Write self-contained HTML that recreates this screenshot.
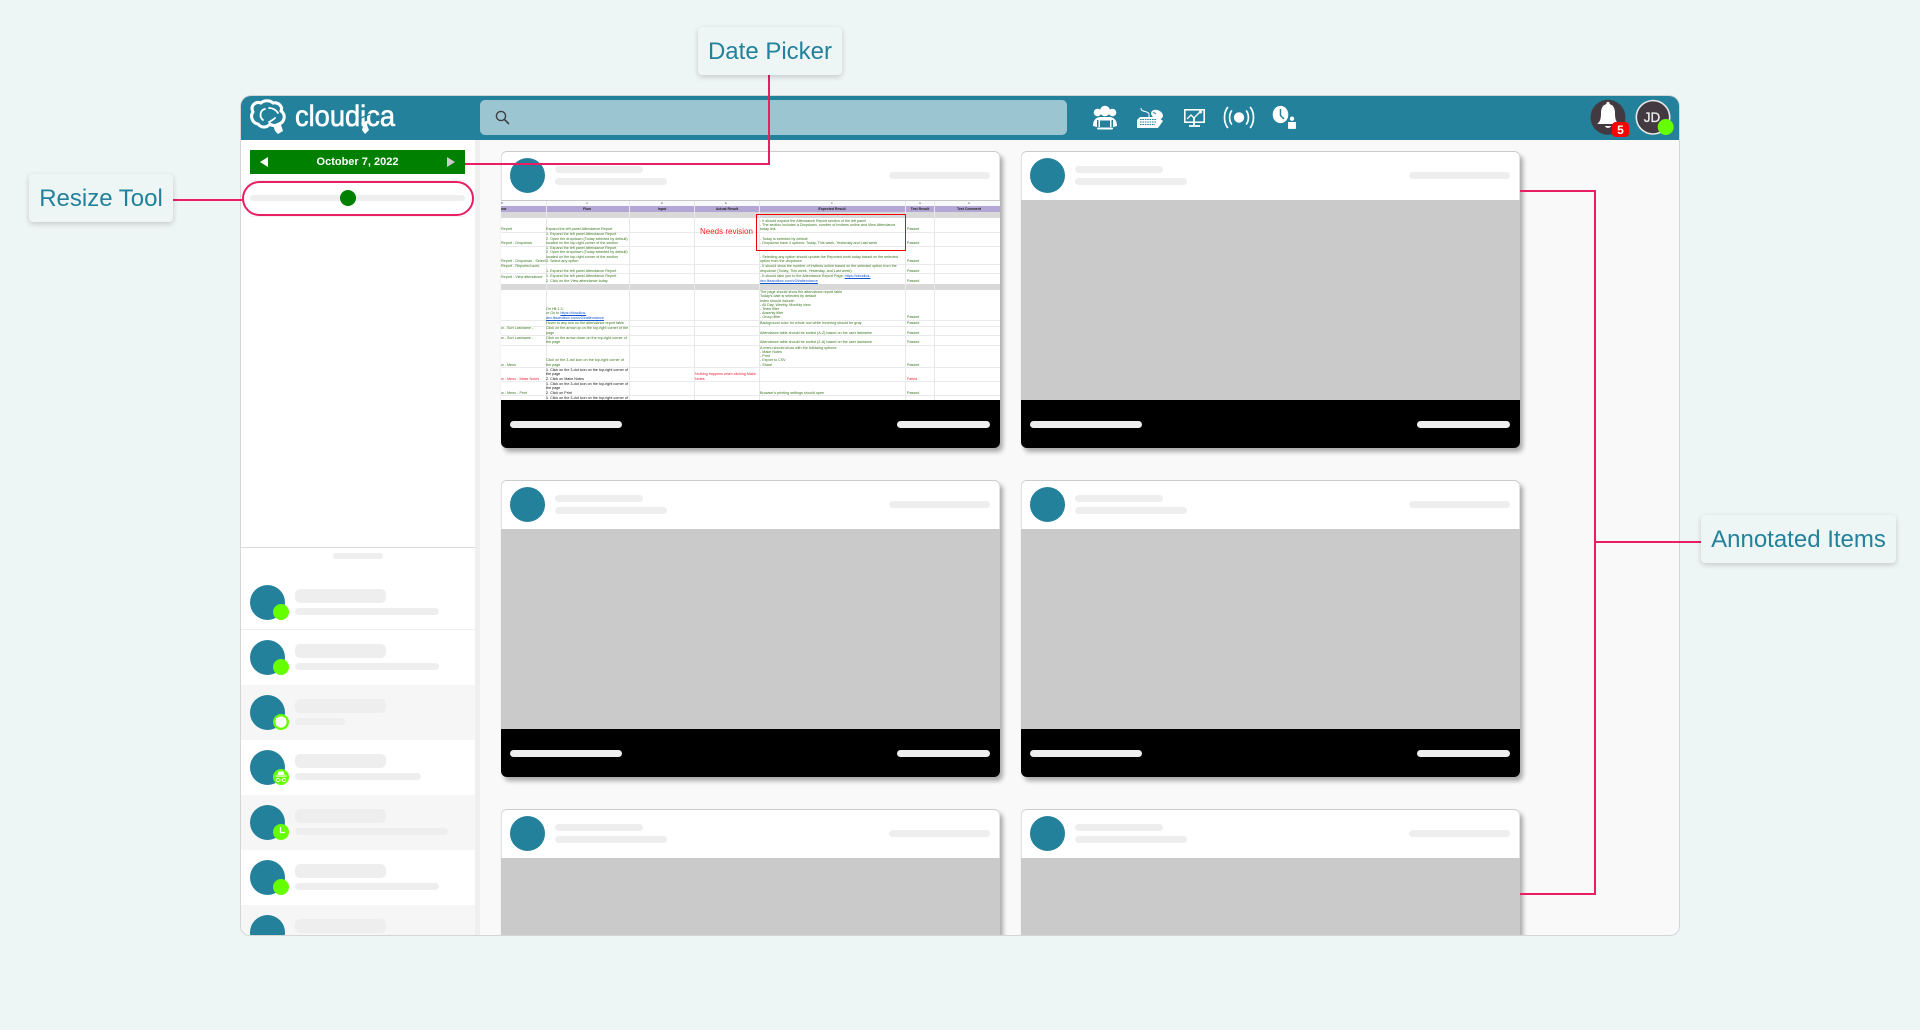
<!DOCTYPE html>
<html><head><meta charset="utf-8"><title>Cloudica</title>
<style>
*{box-sizing:border-box}
html,body{margin:0;padding:0;width:1920px;height:1030px;overflow:hidden;background:#eef6f5;font-family:"Liberation Sans",sans-serif}
.a{position:absolute}
#app{position:absolute;left:241px;top:96px;width:1438px;height:839px;border-radius:10px 10px 9px 9px;overflow:hidden;background:#f9f9f9;box-shadow:0 0 0 1px #d2d6d6}
#pg{position:absolute;left:-241px;top:-96px;width:1920px;height:1031px;overflow:hidden}
.bar{position:absolute;background:#eee;border-radius:4px}
.card{position:absolute;width:498.5px;height:297px;background:#cacaca;border-radius:6px;box-shadow:3px 4px 5px rgba(0,0,0,.32)}
.card.cut{height:126px;border-radius:6px 6px 0 0}
.card .hd{position:absolute;left:0;top:0;width:100%;height:49px;background:#fff;border-radius:6px 6px 0 0;box-shadow:inset 0 1px 0 #ccc,inset 1px 0 0 #e2e2e2,inset -1px 0 0 #e2e2e2}
.card .ft{position:absolute;left:0;top:249px;width:100%;height:48px;background:#000;border-radius:0 0 6px 6px}
.card .av{position:absolute;left:9px;top:7px;width:35px;height:35px;border-radius:50%;background:#23819b}
.card .b1{left:54px;top:15px;width:88px;height:7px}
.card .b2{left:54px;top:27px;width:112px;height:7px}
.card .b3{left:388px;top:21px;width:101px;height:7px}
.card .b4{left:9px;top:21px;width:112px;height:7px;background:#eee}
.card .b5{left:396px;top:21px;width:93px;height:7px;background:#eee}
.row{position:absolute;left:241px;width:234px;height:55px;background:#fff}
.row.g{background:#f6f6f6}
.row .av{position:absolute;left:9px;top:0;width:35px;height:35px;border-radius:50%;background:#23819b}
.row .d{position:absolute;left:32px;width:16px;height:16px;border-radius:50%;background:#66ff00}
.row .n{position:absolute;left:54px;width:91px;height:14px;background:#eee;border-radius:5px}
.row .s{position:absolute;left:54px;height:7px;background:#eee;border-radius:4px}
.call{position:absolute;background:#eef6f5;border-radius:4px;box-shadow:0 2px 6px rgba(0,0,0,.18);color:#23819b;font-size:24px;line-height:50px;text-align:center;white-space:nowrap}
.pk{position:absolute;background:#e91e63}
#sh{position:absolute;left:501px;top:200px;width:498.5px;height:200px;overflow:hidden;background:#fff}
#shi{position:absolute;left:-501px;top:-200px;width:1100px;height:600px;filter:blur(.3px)}
.t{position:absolute;white-space:nowrap;font-size:3.7px;line-height:4px;color:#38761d}
.k{color:#111}.r{color:#e8203a}
.u{color:#1155cc;text-decoration:underline}
.h{position:absolute;white-space:nowrap;font-size:3.5px;line-height:4px;font-weight:bold;color:#222;transform:translateX(-50%);top:206.5px}
.c{position:absolute;white-space:nowrap;font-size:3px;line-height:4px;color:#666;transform:translateX(-50%);top:200.8px}
.hl{position:absolute;left:501px;width:499px;height:1px;background:#eaeaea}
.vl{position:absolute;top:201px;width:1px;height:199px;background:#e8e8e8}
</style></head>
<body>
<div id="app"><div id="pg">

<!-- header -->
<div class="a" style="left:240px;top:96px;width:1440px;height:44px;background:#23819b"></div>
<div class="a" style="left:480px;top:100px;width:587px;height:35px;background:#9cc5d2;border-radius:5px"></div>

<!-- sidebar -->
<div class="a" style="left:241px;top:140px;width:234px;height:795px;background:#fff"></div>
<div class="a" style="left:475px;top:140px;width:5px;height:795px;background:#efefef"></div>
<div class="a" style="left:250px;top:150px;width:215px;height:24px;background:#008000;color:#fff;font-weight:bold;font-size:11px;line-height:24px;text-align:center">October 7, 2022</div>
<div class="a" style="left:250px;top:180px;width:215px;height:37px;border-top:1px solid #f0f0f0;border-bottom:1px solid #f0f0f0"></div>
<div class="bar" style="left:250px;top:195px;width:215px;height:6px;border-radius:3px"></div>
<div class="a" style="left:340px;top:190px;width:16px;height:16px;border-radius:50%;background:#008000"></div>

<div class="a" style="left:241px;top:547px;width:234px;height:388px;background:#fff;border-top:1px solid #dcdcdc"></div>
<div class="bar" style="left:333px;top:553px;width:50px;height:6px;border-radius:3px"></div>

<div class="row" style="top:575px;border-bottom:1px solid #eee"><div class="av" style="top:10px"></div><div class="d" style="top:29px"></div><div class="n" style="top:14px"></div><div class="s" style="top:33px;width:144px"></div></div>
<div class="row" style="top:630px"><div class="av" style="top:10px"></div><div class="d" style="top:29px"></div><div class="n" style="top:14px"></div><div class="s" style="top:33px;width:144px"></div></div>
<div class="row g" style="top:685px"><div class="av" style="top:10px"></div><div class="d" style="top:29px"></div><div class="n" style="top:14px"></div><div class="s" style="top:33px;width:50px"></div></div>
<div class="row" style="top:740px"><div class="av" style="top:10px"></div><div class="d" style="top:29px"></div><div class="n" style="top:14px"></div><div class="s" style="top:33px;width:126px"></div></div>
<div class="row g" style="top:795px"><div class="av" style="top:10px"></div><div class="d" style="top:29px"></div><div class="n" style="top:14px"></div><div class="s" style="top:33px;width:153px"></div></div>
<div class="row" style="top:850px"><div class="av" style="top:10px"></div><div class="d" style="top:29px"></div><div class="n" style="top:14px"></div><div class="s" style="top:33px;width:144px"></div></div>
<div class="row g" style="top:905px;height:30px;overflow:hidden"><div class="av" style="top:10px"></div><div class="n" style="top:14px"></div></div>

<!-- cards -->
<div class="card" style="left:501px;top:151px"><div class="hd"></div><div class="ft"><div class="bar b4"></div><div class="bar b5"></div></div><div class="av"></div><div class="bar b1"></div><div class="bar b2"></div><div class="bar b3"></div></div>
<div class="card" style="left:1021px;top:151px"><div class="hd"></div><div class="ft"><div class="bar b4"></div><div class="bar b5"></div></div><div class="av"></div><div class="bar b1"></div><div class="bar b2"></div><div class="bar b3"></div></div>
<div class="card" style="left:501px;top:480px"><div class="hd"></div><div class="ft"><div class="bar b4"></div><div class="bar b5"></div></div><div class="av"></div><div class="bar b1"></div><div class="bar b2"></div><div class="bar b3"></div></div>
<div class="card" style="left:1021px;top:480px"><div class="hd"></div><div class="ft"><div class="bar b4"></div><div class="bar b5"></div></div><div class="av"></div><div class="bar b1"></div><div class="bar b2"></div><div class="bar b3"></div></div>
<div class="card cut" style="left:501px;top:809px"><div class="hd"></div><div class="av"></div><div class="bar b1"></div><div class="bar b2"></div><div class="bar b3"></div></div>
<div class="card cut" style="left:1021px;top:809px"><div class="hd"></div><div class="av"></div><div class="bar b1"></div><div class="bar b2"></div><div class="bar b3"></div></div>

<!-- spreadsheet -->
<div id="sh"><div id="shi">
<div class="a" style="left:501px;top:200px;width:499px;height:5.5px;background:#f8f9fa;border-top:1px solid #c8c8c8"></div>
<div class="a" style="left:501px;top:205.5px;width:499px;height:6px;background:#b4a7d6"></div>
<div class="a" style="left:501px;top:212px;width:499px;height:6px;background:#d9d9d9"></div>
<div class="a" style="left:501px;top:283.5px;width:499px;height:6.2px;background:#d9d9d9"></div>
<div class="hl" style="top:232px"></div><div class="hl" style="top:246px"></div><div class="hl" style="top:264px"></div><div class="hl" style="top:273px"></div><div class="hl" style="top:320px"></div><div class="hl" style="top:326px"></div><div class="hl" style="top:335px"></div><div class="hl" style="top:345px"></div><div class="hl" style="top:367px"></div><div class="hl" style="top:381px"></div><div class="hl" style="top:395px"></div>
<div class="vl" style="left:545.5px"></div><div class="vl" style="left:629px"></div><div class="vl" style="left:694px"></div><div class="vl" style="left:758.5px"></div><div class="vl" style="left:905px"></div><div class="vl" style="left:934px"></div>

<span class="c" style="left:502px">B</span><span class="c" style="left:587px">C</span><span class="c" style="left:662px">D</span><span class="c" style="left:726px">E</span><span class="c" style="left:832px">F</span><span class="c" style="left:920px">G</span><span class="c" style="left:969px">H</span>
<span class="h" style="left:503px">ame</span><span class="h" style="left:587px">Flow</span><span class="h" style="left:662px">Input</span><span class="h" style="left:727px">Actual Result</span><span class="h" style="left:832px">Expected Result</span><span class="h" style="left:920px">Test Result</span><span class="h" style="left:969px">Test Comment</span>

<span class="t" style="left:501px;top:227px">Report</span>
<span class="t" style="left:501px;top:241px">Report - Dropdown</span>
<span class="t" style="left:501px;top:259px">Report - Dropdown - Select</span>
<span class="t" style="left:501px;top:264.3px">Report - Reported work</span>
<span class="t" style="left:501px;top:274.7px">Report - View attendance</span>
<span class="t" style="left:501px;top:326.3px">w - Sort Lastname -</span>
<span class="t" style="left:501px;top:336px">w - Sort Lastname -</span>
<span class="t" style="left:501px;top:362.7px">w - Menu</span>
<span class="t r" style="left:501px;top:376.7px">w - Menu - Make Notes</span>
<span class="t" style="left:501px;top:390.7px">w - Menu - Print</span>

<span class="t" style="left:546px;top:227px">Expand the left panel Attendance Report</span>
<span class="t" style="left:546px;top:232.3px">1. Expand the left panel Attendance Report</span>
<span class="t" style="left:546px;top:236.7px">2. Open the dropdown (Today selected by default)</span>
<span class="t" style="left:546px;top:241px">located on the top-right corner of the section</span>
<span class="t" style="left:546px;top:246.3px">1. Expand the left panel Attendance Report</span>
<span class="t" style="left:546px;top:250.3px">2. Open the dropdown (Today selected by default)</span>
<span class="t" style="left:546px;top:254.7px">located on the top-right corner of the section</span>
<span class="t" style="left:546px;top:259px">3. Select any option</span>
<span class="t" style="left:546px;top:268.7px">1. Expand the left panel Attendance Report</span>
<span class="t" style="left:546px;top:274.3px">1. Expand the left panel Attendance Report</span>
<span class="t" style="left:546px;top:278.7px">2. Click on the View attendance today</span>
<span class="t" style="left:546px;top:307px">On Hit 1.3:</span>
<span class="t" style="left:546px;top:311.3px">or Go to <span class="u">https://cloudica-</span></span>
<span class="t u" style="left:546px;top:315.7px">dev.fbsandbox.com/v2/#attendance</span>
<span class="t" style="left:546px;top:321px">Hover to any row on the attendance report table</span>
<span class="t" style="left:546px;top:326.3px">Click on the arrow up on the top-right corner of the</span>
<span class="t" style="left:546px;top:330.7px">page</span>
<span class="t" style="left:546px;top:336px">Click on the arrow down on the top-right corner of</span>
<span class="t" style="left:546px;top:340.3px">the page</span>
<span class="t" style="left:546px;top:358.3px">Click on the 3-dot icon on the top-right corner of</span>
<span class="t" style="left:546px;top:362.7px">the page</span>
<span class="t k" style="left:546px;top:368.3px">1. Click on the 3-dot icon on the top-right corner of</span>
<span class="t k" style="left:546px;top:372.3px">the page</span>
<span class="t k" style="left:546px;top:376.7px">2. Click on Make Notes</span>
<span class="t k" style="left:546px;top:382.3px">1. Click on the 3-dot icon on the top-right corner of</span>
<span class="t k" style="left:546px;top:386.3px">the page</span>
<span class="t k" style="left:546px;top:390.7px">2. Click on Print</span>
<span class="t k" style="left:546px;top:395.7px">1. Click on the 3-dot icon on the top-right corner of</span>

<span class="a" style="left:700px;top:227px;font-size:8px;line-height:10px;color:#f22;white-space:nowrap">Needs revision</span>
<span class="t r" style="left:695px;top:372.3px">Nothing happens when clicking Make</span>
<span class="t r" style="left:695px;top:376.7px">Notes</span>

<span class="t" style="left:760px;top:218.7px">- It should expand the Attendance Report section of the left panel</span>
<span class="t" style="left:760px;top:223px">- The section includes a Dropdown, number of invitees online and View Attendance</span>
<span class="t" style="left:760px;top:227px">today link</span>
<span class="t" style="left:760px;top:236.7px">- Today is selected by default</span>
<span class="t" style="left:760px;top:241px">- Dropdown have 4 options: Today, This week, Yesterday and Last week</span>
<span class="t" style="left:760px;top:255px">- Selecting any option should update the Reported work today based on the selected</span>
<span class="t" style="left:760px;top:259px">option from the dropdown</span>
<span class="t" style="left:760px;top:264.3px">- It should show the number of invitees online based on the selected option from the</span>
<span class="t" style="left:760px;top:268.7px">dropdown (Today, This week, Yesterday, and Last week)</span>
<span class="t" style="left:760px;top:274.3px">- It should take you to the Attendance Report Page: <span class="u">https://cloudica-</span></span>
<span class="t u" style="left:760px;top:278.7px">dev.fbsandbox.com/v2/#attendance</span>
<span class="t" style="left:760px;top:290.3px">The page should show the attendance report table</span>
<span class="t" style="left:760px;top:294.3px">Today's date is selected by default</span>
<span class="t" style="left:760px;top:298.7px">Index should include:</span>
<span class="t" style="left:760px;top:302.7px">- All Day, Weekly, Monthly view</span>
<span class="t" style="left:760px;top:307px">- Team filter</span>
<span class="t" style="left:760px;top:311px">- Absenty filter</span>
<span class="t" style="left:760px;top:315.3px">- Group filter</span>
<span class="t" style="left:760px;top:321px">Background color for whole row while hovering should be gray</span>
<span class="t" style="left:760px;top:330.7px">Attendance table should be sorted (A-Z) based on the user lastname</span>
<span class="t" style="left:760px;top:340.3px">Attendance table should be sorted (Z-A) based on the user lastname</span>
<span class="t" style="left:760px;top:346px">A menu should show with the following options:</span>
<span class="t" style="left:760px;top:350px">- Make Notes</span>
<span class="t" style="left:760px;top:354.3px">- Print</span>
<span class="t" style="left:760px;top:358.3px">- Export to CSV</span>
<span class="t" style="left:760px;top:362.7px">- Share</span>
<span class="t" style="left:760px;top:390.7px">Browser's printing settings should open</span>

<span class="t" style="left:907px;top:227px">Passed</span><span class="t" style="left:907px;top:241px">Passed</span><span class="t" style="left:907px;top:259px">Passed</span><span class="t" style="left:907px;top:268.7px">Passed</span><span class="t" style="left:907px;top:278.7px">Passed</span><span class="t" style="left:907px;top:315.3px">Passed</span><span class="t" style="left:907px;top:321px">Passed</span><span class="t" style="left:907px;top:330.7px">Passed</span><span class="t" style="left:907px;top:340.3px">Passed</span><span class="t" style="left:907px;top:362.7px">Passed</span><span class="t r" style="left:907px;top:376.7px">Failed</span><span class="t" style="left:907px;top:390.7px">Passed</span>
</div>
<div class="a" style="left:255px;top:14px;width:150px;height:37px;border:1.4px solid #f00000"></div>
</div>

<!-- icons overlay inside app -->
<svg class="a" style="left:0;top:0" width="1920" height="1030" viewBox="0 0 1920 1030" fill="none">
 <!-- cloud logo -->
 <g stroke="#fff" stroke-width="3.1" stroke-linecap="round" stroke-linejoin="round">
  <path d="M258 124C252 123 250 116 253 112C250 106 255 101 261 103C264 100 270 100 273 103C279 102 283 107 281 111C286 114 285 122 279 124C277 126 272 126 270 124C267 128 261 128 258 124Z" fill="#23819b"/>
  <path d="M265 109C260 110 259 117 263 120" stroke-width="1.8"/>
  <path d="M269 108C273 108 276 110 278 113M275 118C273 120 271 121 269 122" stroke-width="1.8"/>
 </g>
 <path d="M273 125L280 122L283 131L278 134L275 131Z" fill="#fff"/>
 <text x="295" y="126" font-family="Liberation Sans,sans-serif" font-size="30" fill="#fff" stroke="#fff" stroke-width=".6" textLength="100" lengthAdjust="spacingAndGlyphs">cloudica</text>
 <path d="M361 123L369 120L367 125L369 130L365 134L362 130L363 126Z" fill="#fff"/>
 <path d="M361 118L370 114" stroke="#23819b" stroke-width="1.4"/>
 <!-- search -->
 <circle cx="501" cy="116" r="4.6" stroke="#3f3f46" stroke-width="1.4"/>
 <path d="M504.5 119.5L508.5 123.5" stroke="#3f3f46" stroke-width="1.6" stroke-linecap="round"/>
 <!-- people laptop -->
 <g fill="#fff">
  <circle cx="1105" cy="111" r="5.2"/><circle cx="1097.5" cy="112.5" r="3.8"/><circle cx="1112.5" cy="112.5" r="3.8"/>
  <path d="M1093 126C1093 120 1096 117.5 1100 117H1110C1114 117.5 1117 120 1117 126L1113 127V120H1097V127Z"/>
  <path d="M1098.5 119H1111.5V127H1110V120.5H1100V127H1098.5Z"/>
  <rect x="1097" y="127.5" width="16" height="2" rx="1"/>
 </g>
 <!-- keyboard -->
 <path d="M1141 108C1141 113 1148 110 1149 114L1149 117" stroke="#fff" stroke-width="1"/>
 <path d="M1140 117H1158L1163 121L1158 128H1137V120Z" fill="#fff"/>
 <path d="M1140 119.5H1156M1140 122H1156M1140 124.5H1155" stroke="#23819b" stroke-width=".9" stroke-dasharray="1.6 .8"/>
 <ellipse cx="1157" cy="114.5" rx="6.2" ry="4.4" transform="rotate(25 1157 114.5)" fill="#fff"/>
 <path d="M1153 112L1156 114" stroke="#23819b" stroke-width="1"/>
 <!-- monitor chart -->
 <rect x="1184.8" y="109.8" width="19.4" height="12.4" stroke="#fff" stroke-width="1.6"/>
 <path d="M1187 119L1191 115L1194 118L1200 112" stroke="#fff" stroke-width="1.3"/>
 <circle cx="1200.5" cy="112" r="1.5" fill="#fff"/>
 <path d="M1194 118V125M1189 126H1200" stroke="#fff" stroke-width="1.8"/>
 <!-- broadcast -->
 <circle cx="1239" cy="117.5" r="5.2" fill="#fff"/>
 <path d="M1231.5 111C1229 114.5 1229 120.5 1231.5 124M1246.5 111C1249 114.5 1249 120.5 1246.5 124" stroke="#fff" stroke-width="1.7" stroke-linecap="round"/>
 <path d="M1227.5 107.5C1223.5 113 1223.5 122 1227.5 127.5M1250.5 107.5C1254.5 113 1254.5 122 1250.5 127.5" stroke="#fff" stroke-width="1.7" stroke-linecap="round"/>
 <!-- clock lock -->
 <ellipse cx="1280.5" cy="114.5" rx="7.8" ry="8.6" fill="#fff"/>
 <path d="M1280.5 109V115.5L1284 119" stroke="#23819b" stroke-width="1.5"/>
 <circle cx="1292" cy="118.7" r="2.6" fill="#fff" stroke="#23819b" stroke-width=".8"/>
 <rect x="1287.7" y="121.6" width="8.6" height="7.6" rx="1" fill="#fff" stroke="#23819b" stroke-width=".7"/>
 <!-- bell -->
 <circle cx="1608" cy="117.3" r="17.5" fill="#423a40"/>
 <path d="M1608 104C1603 104 1601 108 1601 113C1601 119 1600 122 1597 124H1619C1616 122 1615 119 1615 113C1615 108 1613 104 1608 104Z" fill="#fff"/>
 <circle cx="1608" cy="103.5" r="1.6" fill="#fff"/>
 <path d="M1605 126H1611C1610.5 128.5 1605.5 128.5 1605 126Z" fill="#fff"/>
 <rect x="1612" y="122" width="17" height="15" rx="4" fill="#f00"/>
 <text x="1620.5" y="134" text-anchor="middle" font-family="Liberation Sans,sans-serif" font-size="12" font-weight="bold" fill="#fff">5</text>
 <!-- JD avatar -->
 <circle cx="1653" cy="117.3" r="16.7" fill="#423a40" stroke="#e9e9e9" stroke-width="1.6"/>
 <text x="1652" y="122" text-anchor="middle" font-family="Liberation Sans,sans-serif" font-size="13.5" fill="#eee" stroke="#eee" stroke-width=".3">JD</text>
 <circle cx="1665.7" cy="127" r="8" fill="#66ff00"/>
 <!-- date arrows -->
 <path d="M268 157V167L260 162Z" fill="#fff"/>
 <path d="M447 157V167L455 162Z" fill="#ccc"/>
 <!-- status icons -->
 <circle cx="281" cy="722" r="5.6" fill="#fff"/>
 <path d="M276 718H286V721C286 724 284 725.6 281 727C278 725.6 276 724 276 721Z" fill="#fff"/>
 <path d="M277.5 775L278.5 771.5H283.5L284.5 775ZM275.5 775.5H286.5V776.6H275.5Z" fill="#fff"/>
 <circle cx="278" cy="780" r="1.7" stroke="#fff" stroke-width=".8"/><circle cx="284" cy="780" r="1.7" stroke="#fff" stroke-width=".8"/><path d="M279.7 780H282.3" stroke="#fff" stroke-width=".7"/>
 <path d="M280.5 827V832.5H285" stroke="#fff" stroke-width="1.2"/>
</svg>

</div></div>

<!-- annotations -->
<div class="pk" style="left:768px;top:75px;width:2.4px;height:90px"></div>
<div class="pk" style="left:465px;top:162.5px;width:305.4px;height:2.4px"></div>
<div class="a" style="left:242px;top:181px;width:232px;height:35px;border:2.2px solid #e91e63;border-radius:18px"></div>
<div class="pk" style="left:173px;top:198.8px;width:69px;height:2.4px"></div>
<div class="pk" style="left:1520px;top:190px;width:76px;height:2.2px"></div>
<div class="pk" style="left:1594px;top:190px;width:2.2px;height:704.5px"></div>
<div class="pk" style="left:1520px;top:892.5px;width:76px;height:2.2px"></div>
<div class="pk" style="left:1596px;top:540.5px;width:105px;height:2px"></div>

<div class="call" style="left:698px;top:27px;width:144px;height:48px">Date Picker</div>
<div class="call" style="left:29px;top:174px;width:144px;height:48px">Resize Tool</div>
<div class="call" style="left:1701px;top:515px;width:195px;height:48px">Annotated Items</div>
</body></html>
